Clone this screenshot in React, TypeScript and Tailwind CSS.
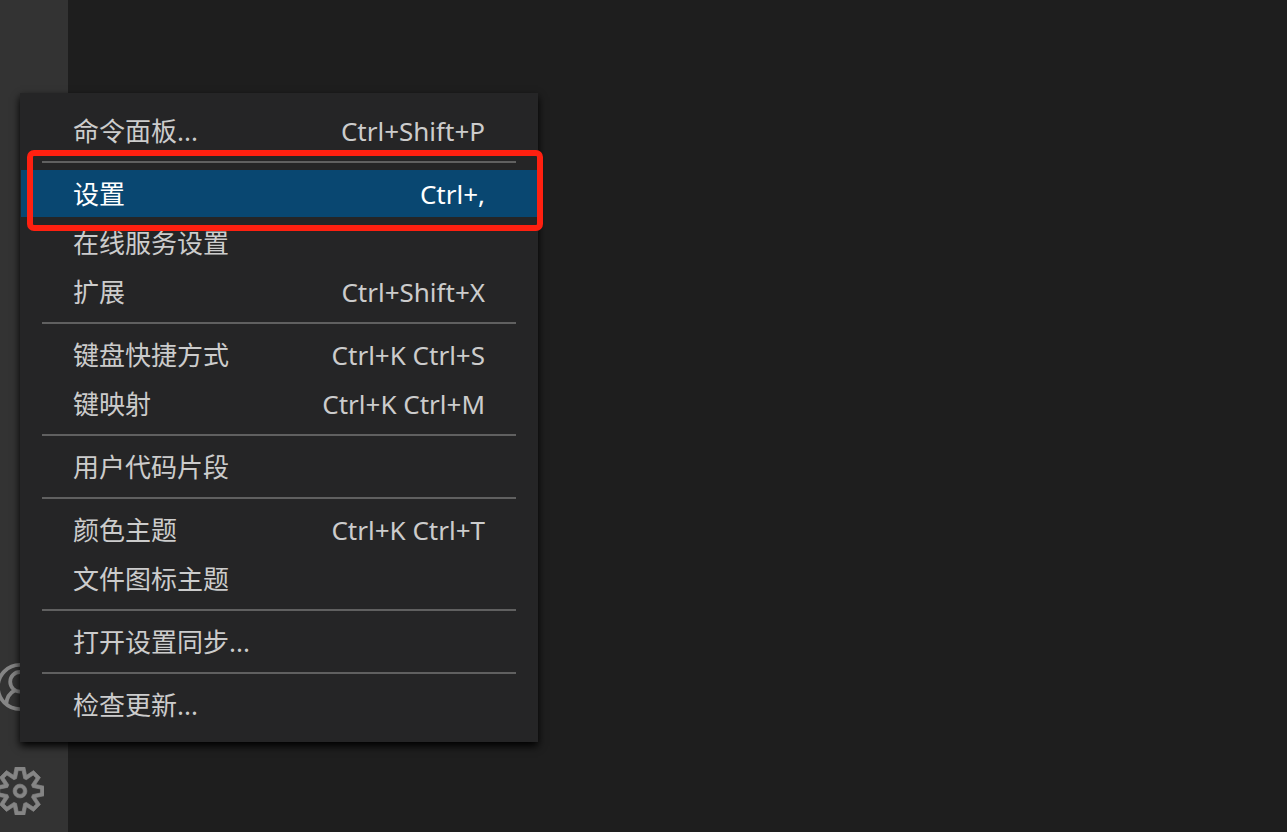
import { Fragment } from "react";

type Item = { label: string; keys?: string; active?: boolean };

const groups: Item[][] = [
  [{ label: "命令面板...", keys: "Ctrl+Shift+P" }],
  [
    { label: "设置", keys: "Ctrl+,", active: true },
    { label: "在线服务设置" },
    { label: "扩展", keys: "Ctrl+Shift+X" },
  ],
  [
    { label: "键盘快捷方式", keys: "Ctrl+K Ctrl+S" },
    { label: "键映射", keys: "Ctrl+K Ctrl+M" },
  ],
  [{ label: "用户代码片段" }],
  [{ label: "颜色主题", keys: "Ctrl+K Ctrl+T" }, { label: "文件图标主题" }],
  [{ label: "打开设置同步..." }],
  [{ label: "检查更新..." }],
];

function AccountIcon() {
  return (
    <svg
      viewBox="0 0 24 24"
      className="size-12"
      fill="none"
      stroke="currentColor"
      strokeWidth="1.9"
      aria-hidden="true"
    >
      <circle cx="12" cy="12" r="11.05" />
      <circle cx="12" cy="9.4" r="4.9" />
      <path d="M5.1 20.6C5.3 17.4 6.9 14.9 9.5 13.6M18.9 20.6C18.7 17.4 17.1 14.9 14.5 13.6" />
    </svg>
  );
}

function GearIcon() {
  return (
    <svg
      viewBox="0 0 24 24"
      className="size-12"
      fill="currentColor"
      fillRule="evenodd"
      stroke="currentColor"
      strokeWidth="0.35"
      aria-hidden="true"
    >
      <path d="M19.85 8.75l4.15.83v4.84l-4.15.83 2.35 3.52-3.43 3.43-3.52-2.35-.83 4.15H9.58l-.83-4.15-3.52 2.35-3.43-3.43 2.35-3.52L0 14.42V9.58l4.15-.83L1.8 5.23 5.23 1.8l3.52 2.35L9.58 0h4.84l.83 4.15 3.52-2.35 3.43 3.43-2.35 3.52zm-1.57 5.07l4-.81v-2l-4-.81-.54-1.3 2.29-3.43-1.43-1.43-3.43 2.29-1.3-.54-.81-4h-2l-.81 4-1.3.54-3.43-2.29-1.43 1.43L6.38 8.9l-.54 1.3-4 .81v2l4 .81.54 1.3-2.29 3.43 1.43 1.43 3.43-2.29 1.3.54.81 4h2l.81-4 1.3-.54 3.43 2.29 1.43-1.43-2.29-3.43.54-1.3zm-8.186-4.672A3.43 3.43 0 0 1 12 8.57 3.44 3.44 0 0 1 15.43 12a3.43 3.43 0 1 1-5.336-2.852zm.956 4.274c.281.188.612.288.95.288A1.7 1.7 0 0 0 13.71 12a1.71 1.71 0 1 0-2.66 1.422z" />
    </svg>
  );
}

function MenuRow({ label, keys, active }: Item) {
  return (
    <div className="relative mb-0.5">
      <button
        type="button"
        role="menuitem"
        className={
          "flex h-[47px] w-full items-center justify-between px-[52px] text-left whitespace-nowrap " +
          (active ? "bg-[#094771] text-white" : "text-[#cccccc]")
        }
      >
        <span>{label}</span>
        {keys && <span>{keys}</span>}
      </button>
      {active && (
        <div className="pointer-events-none absolute -top-5 -right-1.5 -bottom-3.5 left-1.5 z-10 rounded-[7px] border-6 border-[#ff2010]" />
      )}
    </div>
  );
}

export default function App() {
  return (
    <div className="relative flex min-h-screen overflow-hidden bg-[#1e1e1e] font-['Noto_Sans','Noto_Sans_CJK_SC',sans-serif] text-[26px] leading-9">
      <nav className="flex w-[68px] shrink-0 flex-col items-start justify-end gap-14 overflow-hidden bg-[#333333] pb-[17px] text-[#858585]">
        <button type="button" aria-label="帐户" className="-ml-1">
          <AccountIcon />
        </button>
        <button type="button" aria-label="管理" className="-ml-1">
          <GearIcon />
        </button>
      </nav>
      <main className="flex-1" />
      <div
        role="menu"
        className="absolute top-[93px] left-5 flex w-[518px] flex-col bg-[#252526] px-px pt-3.5 pb-3 shadow-[0_4px_8px_#000000]"
      >
        {groups.map((group, i) => (
          <Fragment key={i}>
            {i > 0 && <div role="separator" className="mx-[21px] mt-[5px] mb-[7px] h-0.5 bg-[#606060]" />}
            {group.map((item) => (
              <MenuRow key={item.label} {...item} />
            ))}
          </Fragment>
        ))}
      </div>
    </div>
  );
}
